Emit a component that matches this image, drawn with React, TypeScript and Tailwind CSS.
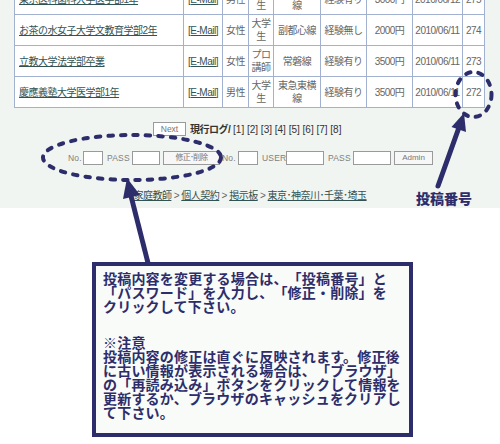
import React from "react";

const NAVY = "#2d2d6b";

type Row = {
  school: string;
  sex: string;
  status: string;
  line: string;
  exp: string;
  price: string;
  date: string;
  no: string;
};

const rows: Row[] = [
  { school: "東京医科歯科大学医学部1年", sex: "男性", status: "大学生", line: "京浜東北線", exp: "経験有り", price: "3000円", date: "2010/06/12", no: "275" },
  { school: "お茶の水女子大学文教育学部2年", sex: "女性", status: "大学生", line: "副都心線", exp: "経験無し", price: "2000円", date: "2010/06/11", no: "274" },
  { school: "立教大学法学部卒業", sex: "女性", status: "プロ講師", line: "常磐線", exp: "経験有り", price: "3500円", date: "2010/06/11", no: "273" },
  { school: "慶應義塾大学医学部1年", sex: "男性", status: "大学生", line: "東急東横線", exp: "経験有り", price: "3500円", date: "2010/06/11", no: "272" },
];

const td = "border border-[#a3b1d1] px-[2px] py-[2px] text-center align-middle";

function Input({ w }: { w: string }) {
  return <input className={`h-[14px] border border-[#9a9a9a] bg-white ${w}`} />;
}

function Label({ text, w, ml }: { text: string; w: string; ml: string }) {
  return (
    <span className={`whitespace-nowrap text-[8.5px] tracking-[0.2px] text-[#808080] ${w} ${ml}`}>
      {text}
    </span>
  );
}

export default function App() {
  return (
    <div
      className="relative h-[444px] w-[500px] overflow-hidden bg-white"
      style={{ fontFamily: '"Liberation Sans", "Noto Sans CJK JP", sans-serif' }}
    >
      {/* board area */}
      <div className="flex h-[208px] flex-col bg-[#f1f5f1]">
        <table className="-mt-[17px] ml-[14px] w-[470px] table-fixed border-collapse bg-white text-[10px] leading-[13px] tracking-[-0.5px] text-[#666]">
          <colgroup>
            <col className="w-[169px]" />
            <col className="w-[39px]" />
            <col className="w-[26px]" />
            <col className="w-[25px]" />
            <col className="w-[47px]" />
            <col className="w-[46px]" />
            <col className="w-[46px]" />
            <col className="w-[50px]" />
            <col className="w-[22px]" />
          </colgroup>
          <tbody>
            {rows.map((r) => (
              <tr key={r.no}>
                <td className="border border-[#a3b1d1] py-[2px] pl-[4px] text-left align-middle">
                  <a className="text-[#335252] underline">{r.school}</a>
                </td>
                <td className={td}>
                  <a className="whitespace-nowrap text-[#335252] underline">[E-Mail]</a>
                </td>
                <td className={td}>{r.sex}</td>
                <td className={td}>{r.status}</td>
                <td className={td}>{r.line}</td>
                <td className={td}>{r.exp}</td>
                <td className={`${td} whitespace-nowrap`}>{r.price}</td>
                <td className="whitespace-nowrap border border-[#a3b1d1] px-0 py-[2px] text-center align-middle">{r.date}</td>
                <td className={td}>{r.no}</td>
              </tr>
            ))}
          </tbody>
        </table>

        {/* pager */}
        <div className="mt-[14px] flex h-[14px] items-center pl-[153px]">
          <button className="h-[14px] w-[33px] border border-[#9a9a9a] bg-white text-[8.5px] leading-[12px] text-[#777]">
            Next
          </button>
          <span className="ml-[4px] whitespace-nowrap text-[10px] text-[#333]">
            <b className="tracking-[-0.5px]">現行ログ/</b> [1] [2] [3] [4] [5] [6] [7] [8]
          </span>
        </div>

        {/* edit / admin form */}
        <div className="mt-[15px] flex h-[14px] items-center pl-[68px]">
          <Label text="No." w="w-[13px]" ml="ml-0" />
          <span className="ml-[2px] flex"><Input w="w-[20px]" /></span>
          <Label text="PASS" w="w-[22px]" ml="ml-[4px]" />
          <span className="ml-[3px] flex"><Input w="w-[28px]" /></span>
          <button className="ml-[3px] h-[14px] w-[57px] border border-[#9a9a9a] bg-[#f7f7f7] text-[8px] leading-[12px] tracking-[-0.8px] text-[#777]">
            修正･削除
          </button>
          <Label text="No." w="w-[13px]" ml="ml-[2px]" />
          <span className="ml-[3px] flex"><Input w="w-[20px]" /></span>
          <Label text="USER" w="w-[22px]" ml="ml-[4px]" />
          <span className="ml-[2px] flex"><Input w="w-[38px]" /></span>
          <Label text="PASS" w="w-[22px]" ml="ml-[4px]" />
          <span className="ml-[3px] flex"><Input w="w-[38px]" /></span>
          <button className="ml-[3px] h-[14px] w-[39px] border border-[#9a9a9a] bg-[#f7f7f7] text-[8px] leading-[12px] text-[#777]">
            Admin
          </button>
        </div>

        {/* breadcrumb */}
        <div className="mt-[24px] flex justify-center whitespace-nowrap text-[10px] leading-[13px] tracking-[-0.5px] text-[#666]">
          <a className="text-[#335252] underline">家庭教師</a>
          <span>&nbsp;&gt;&nbsp;</span>
          <a className="text-[#335252] underline">個人契約</a>
          <span>&nbsp;&gt;&nbsp;</span>
          <a className="text-[#335252] underline">掲示板</a>
          <span>&nbsp;&gt;&nbsp;</span>
          <a className="text-[#335252] underline">東京･神奈川･千葉･埼玉</a>
        </div>
      </div>

      {/* help box */}
      <div
        className="ml-[92px] mt-[54px] box-border h-[175px] w-[321px] border-[4px] border-[#2d2d6b] bg-[#f8fbf8] pl-[7px] pt-[5px] text-[14px] font-bold leading-[14px] tracking-[0.2px] text-[#2d2d6b] [text-spacing-trim:space-all]"
        style={{ fontFamily: '"Noto Sans CJK JP", sans-serif' }}
      >
        <p className="whitespace-nowrap">
          投稿内容を変更する場合は、「投稿番号」と<br />
          「パスワード」を入力し、「修正・削除」を<br />
          クリックして下さい。
        </p>
        <p className="mt-[22px] whitespace-nowrap">
          ※注意<br />
          投稿内容の修正は直ぐに反映されます。修正後<br />
          に古い情報が表示される場合は、「ブラウザ」<br />
          の「再読み込み」ボタンをクリックして情報を<br />
          更新するか、ブラウザのキャッシュをクリアし<br />
          て下さい。
        </p>
      </div>

      {/* annotations */}
      <svg
        className="pointer-events-none absolute left-0 top-0"
        width="500"
        height="444"
        viewBox="0 0 500 444"
      >
        <ellipse cx="132" cy="157.5" rx="89" ry="22.5" fill="none" stroke={NAVY} strokeWidth="4" strokeDasharray="4.5 8" strokeLinecap="round" />
        <ellipse cx="473.5" cy="94.5" rx="18" ry="22.5" fill="none" stroke={NAVY} strokeWidth="4" strokeDasharray="4.5 8" strokeLinecap="round" />
        <line x1="148" y1="263" x2="130.5" y2="194" stroke={NAVY} strokeWidth="5" />
        <polygon points="127,178 140,195 123,199" fill={NAVY} />
        <line x1="438" y1="186" x2="459.5" y2="126" stroke={NAVY} strokeWidth="5" strokeLinecap="round" />
        <polygon points="464,113 466,132 451.5,127" fill={NAVY} />
      </svg>
      <div
        className="absolute left-[416px] top-[190px] whitespace-nowrap text-[14px] font-black leading-[16px] text-[#2d2d6b]"
        style={{ fontFamily: '"Noto Sans CJK JP", sans-serif' }}
      >
        投稿番号
      </div>
    </div>
  );
}
